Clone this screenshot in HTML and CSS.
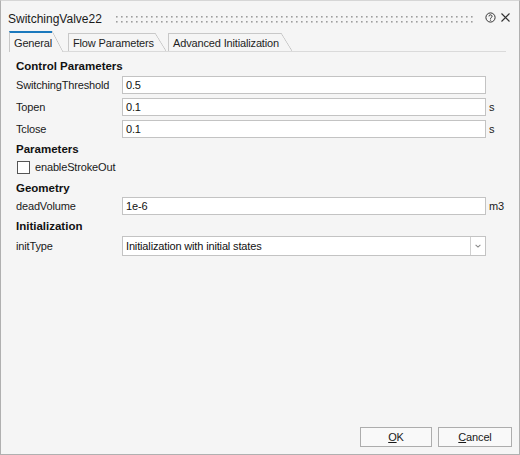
FILE: index.html
```html
<!DOCTYPE html>
<html>
<head>
<meta charset="utf-8">
<link rel="stylesheet" href="styles.css">
</head>
<body>
<div class="window">
  <div class="titlebar">
    <span class="title">SwitchingValve22</span>
    <svg class="grip"><defs><pattern id="dots" width="5" height="5" patternUnits="userSpaceOnUse"><rect width="1.6" height="1.6" fill="#9e9e9e"/></pattern></defs><rect width="100%" height="100%" fill="url(#dots)"/></svg>
    <svg class="help" viewBox="0 0 11 11"><circle cx="5.5" cy="5.5" r="4.6" fill="none" stroke="#333" stroke-width="1"/><path d="M4 4.4a1.5 1.5 0 1 1 2.3 1.2c-.6.35-.8.6-.8 1.2" fill="none" stroke="#333" stroke-width="1"/><circle cx="5.5" cy="8.1" r=".65" fill="#333"/></svg>
    <svg class="close" viewBox="0 0 9 9"><path d="M.5 .5L8.5 8.5M8.5 .5L.5 8.5" stroke="#333" stroke-width="1.1"/></svg>
  </div>
  <div class="tabs">
    <div class="tab active"><span class="tab-label w-general">General</span><span class="tab-slant"></span></div>
    <div class="tab tab-flow"><span class="tab-label w-flow">Flow Parameters</span><span class="tab-slant"></span></div>
    <div class="tab tab-adv"><span class="tab-label w-adv">Advanced Initialization</span><span class="tab-slant"></span></div>
  </div>
  <div class="content">
    <div class="section">Control Parameters</div>
    <div class="row mt1"><span class="label">SwitchingThreshold</span><div class="field">0.5</div></div>
    <div class="row mt4"><span class="label">Topen</span><div class="field">0.1</div><span class="unit">s</span></div>
    <div class="row mt4"><span class="label">Tclose</span><div class="field">0.1</div><span class="unit">s</span></div>
    <div class="section mt2">Parameters</div>
    <div class="row"><span class="check"></span><span class="check-label">enableStrokeOut</span></div>
    <div class="section mt3">Geometry</div>
    <div class="row"><span class="label">deadVolume</span><div class="field">1e-6</div><span class="unit">m3</span></div>
    <div class="section mt2">Initialization</div>
    <div class="row row-combo mt1"><span class="label">initType</span>
      <div class="combo"><span class="combo-text">Initialization with initial states</span><span class="combo-btn"><svg viewBox="0 0 6 4" class="chev"><path d="M.6 .8L3 3.1 5.4 .8" fill="none" stroke="#8a8a8a" stroke-width="1.1"/></svg></span></div>
    </div>
  </div>
  <div class="footer">
    <button class="btn btn-ok"><u>O</u>K</button>
    <button class="btn btn-cancel"><u>C</u>ancel</button>
  </div>
</div>
</body>
</html>
```
FILE: styles.css
```css
* { box-sizing: border-box; }
body {
  margin: 0;
  font-family: "Liberation Sans", Arial, sans-serif;
  font-size: 11px;
  letter-spacing: -0.15px;
  color: #1a1a1a;
}
.window {
  width: 520px;
  height: 455px;
  background: #f5f5f5;
  border: 1px solid #b0b0b0;
  border-top-color: #d6d6d6;
  display: flex;
  flex-direction: column;
}
.titlebar {
  display: flex;
  align-items: center;
  height: 30px;
  padding: 6px 9px 0 7px;
}
.title { font-size: 12px; letter-spacing: 0; color: #1a1a1a; }
.grip {
  flex: 1;
  height: 7px;
  margin: 0 12px 0 14px;
}
.help { width: 11px; height: 11px; margin: 0 5px 4px 0; }
.close { width: 9px; height: 9px; margin-bottom: 4px; }

.tabs {
  display: flex;
  align-items: flex-end;
  height: 21px;
  margin: 0 13px 0 8px;
  border-bottom: 1px solid #dadada;
}
.tab { display: flex; height: 18px; }
.tab-label {
  display: flex;
  align-items: center;
  border-top: 1px solid #c8c8c8;
  border-left: 1px solid #c8c8c8;
  padding-left: 4px;
  white-space: nowrap;
  color: #1e1e1e;
}
.tab-slant {
  width: 11px;
  background: linear-gradient(to top right, transparent calc(50% - 0.7px), #c4c4c4 50%, transparent calc(50% + 0.7px));
}
.tab.active { height: 21px; margin-bottom: -1px; }
.tab.active .tab-label { border-top: 2px solid #1b79bd; background: #f5f5f5; }
.tab.active .tab-slant {
  background: linear-gradient(to top right, #f5f5f5 calc(50% - 0.7px), #c4c4c4 50%, #f5f5f5 calc(50% + 0.7px));
}
.w-general { width: 43px; }
.w-flow { width: 87px; }
.w-adv { width: 113px; }
.tab-flow { margin-left: 5px; }
.tab-adv { margin-left: 2px; }

.content {
  flex: 1;
  padding: 5px 0 0 15px;
  display: flex;
  flex-direction: column;
}
.section {
  font-weight: bold;
  font-size: 11.5px;
  letter-spacing: 0;
  height: 18px;
  line-height: 18px;
  color: #111;
}
.row { display: flex; align-items: center; height: 18px; }
.row-combo { height: 20px; }
.label { width: 106px; }
.field {
  width: 364px;
  height: 18px;
  border: 1px solid #c3c3c3;
  background: #fff;
  padding-left: 3px;
  display: flex;
  align-items: center;
  color: #111;
}
.unit { margin-left: 3px; }
.check {
  width: 13px;
  height: 13px;
  border: 1px solid #555;
  background: #fff;
  margin-left: 1px;
}
.check-label { margin-left: 5px; }
.combo {
  width: 364px;
  height: 20px;
  border: 1px solid #c3c3c3;
  background: #fff;
  display: flex;
}
.combo-text { flex: 1; padding-left: 3px; display: flex; align-items: center; color: #111; }
.combo-btn {
  width: 15px;
  border-left: 1px solid #d0d0d0;
  display: flex;
  align-items: center;
  justify-content: center;
}
.chev { width: 6px; height: 4px; }
.mt1 { margin-top: 1px; }
.mt2 { margin-top: 2px; }
.mt3 { margin-top: 3px; }
.mt4 { margin-top: 4px; }

.footer {
  display: flex;
  justify-content: flex-end;
  gap: 6px;
  padding: 0 7px 7px 0;
}
.btn {
  font-family: inherit;
  font-size: 11px;
  letter-spacing: -0.15px;
  height: 20px;
  border: 1px solid #adadad;
  background: #f9f9f9;
  color: #1a1a1a;
  padding: 0;
}
.btn-ok { width: 72px; }
.btn-cancel { width: 74px; }
```
